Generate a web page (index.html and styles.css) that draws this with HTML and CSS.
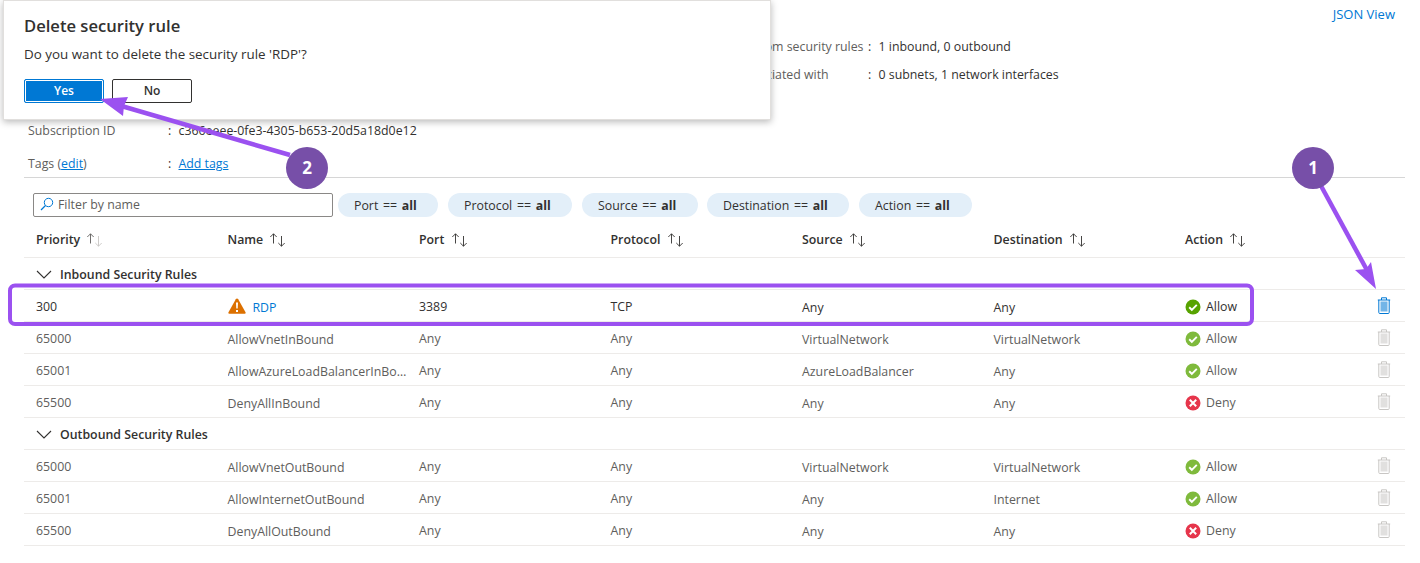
FILE: index.html
```html
<!DOCTYPE html>
<html lang="en">

<head>
    <meta charset="UTF-8">
    <meta name="viewport" content="width=device-width, initial-scale=1.0">
    <title>Delete security rule</title>
    <link rel="stylesheet" href="styles.css">
</head>

<body>
    <svg class="defs" width="0" height="0">
        <symbol id="sort" viewBox="0 0 18 14">
            <path d="M4.500 10.500V.8M1.300 4L4.500.8 7.700 4" fill="none" stroke="#323130" stroke-width=".9"/>
            <path d="M12.500 3v10.200M9.300 10l3.200 3.200 3.200-3.200" fill="none" stroke="#323130" stroke-width=".9"/>
        </symbol>
        <symbol id="sort-up" viewBox="0 0 18 14">
            <path d="M4.500 10.500V.8M1.300 4L4.500.8 7.700 4" fill="none" stroke="#605e5c" stroke-width=".9"/>
            <path d="M12.500 3v10.200M9.300 10l3.200 3.200 3.200-3.200" fill="none" stroke="#c8c6c4" stroke-width=".9"/>
        </symbol>
        <symbol id="chevron" viewBox="0 0 16 10">
            <path d="M1 1l7 7 7-7" fill="none" stroke="#323130" stroke-width="1.100"/>
        </symbol>
        <symbol id="check" viewBox="0 0 16 16">
            <circle cx="8" cy="8" r="7.500"/>
            <path d="M4.200 8.300l2.600 2.500 5-5" fill="none" stroke="#fff" stroke-width="1.900"/>
        </symbol>
        <symbol id="cross" viewBox="0 0 16 16">
            <circle cx="8" cy="8" r="7.500" fill="#e6354b"/>
            <path d="M4.800 4.800l6.400 6.400M11.200 4.800l-6.400 6.400" fill="none" stroke="#fff" stroke-width="2"/>
        </symbol>
        <symbol id="trash" viewBox="0 0 14 17">
            <path d="M3.500 4.500h7v10h-7z" fill="currentColor" opacity=".55"/>
            <path d="M.8 3h12.400M1.800 3v12.500q0 1 1 1h8.400q1 0 1-1V3M4.500 3V.8h5V3" fill="none" stroke="currentColor" stroke-width="1"/>
        </symbol>
    </svg>

    <div class="page">
        <div class="json-row"><a class="link-plain" href="#">JSON View</a></div>

        <div class="essentials">
            <div class="essentials-col">
                <div class="field"></div>
                <div class="field"></div>
                <div class="field"></div>
                <div class="field"><span class="label">Subscription ID</span><span class="sep">:</span><span>c366eeee-0fe3-4305-b653-20d5a18d0e12</span></div>
                <div class="field field-tags"><span class="label">Tags (<a href="#">edit</a>)</span><span class="sep">:</span><a href="#">Add tags</a></div>
            </div>
            <div class="essentials-col essentials-right">
                <div class="field"><span class="label">Custom security rules</span><span class="sep">:</span><span>1 inbound, 0 outbound</span></div>
                <div class="field"><span class="label">Associated with</span><span class="sep">:</span><span>0 subnets, 1 network interfaces</span></div>
            </div>
        </div>

        <div class="filters">
            <div class="search">
                <svg width="14" height="14" viewBox="0 0 14 14"><circle cx="8.500" cy="5.500" r="4.200" fill="none" stroke="#0078d4"/><path d="M5.500 8.500L1 13" stroke="#0078d4" stroke-width="1.200"/></svg>
                <span>Filter by name</span>
            </div>
            <div class="pill pill-port">Port == <b>all</b></div>
            <div class="pill pill-protocol">Protocol == <b>all</b></div>
            <div class="pill pill-source">Source == <b>all</b></div>
            <div class="pill pill-dest">Destination == <b>all</b></div>
            <div class="pill pill-action">Action == <b>all</b></div>
        </div>

        <div class="row head">
            <div>Priority <svg class="sort"><use href="#sort-up"/></svg></div>
            <div>Name <svg class="sort"><use href="#sort"/></svg></div>
            <div>Port <svg class="sort"><use href="#sort"/></svg></div>
            <div>Protocol <svg class="sort"><use href="#sort"/></svg></div>
            <div>Source <svg class="sort"><use href="#sort"/></svg></div>
            <div>Destination <svg class="sort"><use href="#sort"/></svg></div>
            <div>Action <svg class="sort"><use href="#sort"/></svg></div>
        </div>

        <div class="group"><svg class="chevron"><use href="#chevron"/></svg>Inbound Security Rules</div>

        <div class="row rule active">
            <div>300</div>
            <div class="low name-cell">
                <svg class="warn" width="18" height="16" viewBox="0 0 18 16"><path d="M9 .5q.8 0 1.200.7l7.300 13q.6 1.300-.8 1.500H1.300q-1.400-.2-.8-1.500l7.300-13Q8.200.5 9 .500z" fill="#dc7000"/><path d="M8 4.500h2l-.3 6H8.300zM8 12h2v2H8z" fill="#fff"/></svg>
                <a class="link-plain" href="#">RDP</a>
            </div>
            <div>3389</div>
            <div>TCP</div>
            <div class="low">Any</div>
            <div class="low">Any</div>
            <div class="state"><svg class="ok"><use href="#check"/></svg>Allow</div>
            <div class="bin"><svg class="trash"><use href="#trash"/></svg></div>
        </div>
        <div class="row rule">
            <div>65000</div>
            <div class="low">AllowVnetInBound</div>
            <div>Any</div>
            <div>Any</div>
            <div class="low">VirtualNetwork</div>
            <div class="low">VirtualNetwork</div>
            <div class="state"><svg class="ok"><use href="#check"/></svg>Allow</div>
            <div class="bin"><svg class="trash"><use href="#trash"/></svg></div>
        </div>
        <div class="row rule">
            <div>65001</div>
            <div class="low clip">AllowAzureLoadBalancerInBound</div>
            <div>Any</div>
            <div>Any</div>
            <div class="low">AzureLoadBalancer</div>
            <div class="low">Any</div>
            <div class="state"><svg class="ok"><use href="#check"/></svg>Allow</div>
            <div class="bin"><svg class="trash"><use href="#trash"/></svg></div>
        </div>
        <div class="row rule">
            <div>65500</div>
            <div class="low">DenyAllInBound</div>
            <div>Any</div>
            <div>Any</div>
            <div class="low">Any</div>
            <div class="low">Any</div>
            <div class="state"><svg class="ok"><use href="#cross"/></svg>Deny</div>
            <div class="bin"><svg class="trash"><use href="#trash"/></svg></div>
        </div>

        <div class="group"><svg class="chevron"><use href="#chevron"/></svg>Outbound Security Rules</div>

        <div class="row rule">
            <div>65000</div>
            <div class="low">AllowVnetOutBound</div>
            <div>Any</div>
            <div>Any</div>
            <div class="low">VirtualNetwork</div>
            <div class="low">VirtualNetwork</div>
            <div class="state"><svg class="ok"><use href="#check"/></svg>Allow</div>
            <div class="bin"><svg class="trash"><use href="#trash"/></svg></div>
        </div>
        <div class="row rule">
            <div>65001</div>
            <div class="low">AllowInternetOutBound</div>
            <div>Any</div>
            <div>Any</div>
            <div class="low">Any</div>
            <div class="low">Internet</div>
            <div class="state"><svg class="ok"><use href="#check"/></svg>Allow</div>
            <div class="bin"><svg class="trash"><use href="#trash"/></svg></div>
        </div>
        <div class="row rule">
            <div>65500</div>
            <div class="low">DenyAllOutBound</div>
            <div>Any</div>
            <div>Any</div>
            <div class="low">Any</div>
            <div class="low">Any</div>
            <div class="state"><svg class="ok"><use href="#cross"/></svg>Deny</div>
            <div class="bin"><svg class="trash"><use href="#trash"/></svg></div>
        </div>
    </div>

    <!-- confirm dialog -->
    <div class="dialog">
        <div class="dialog-title">Delete security rule</div>
        <p class="dialog-text">Do you want to delete the security rule 'RDP'?</p>
        <div class="dialog-buttons">
            <button class="btn btn-yes">Yes</button>
            <button class="btn">No</button>
        </div>
    </div>

    <!-- annotations drawn on top of the screenshot -->
    <svg class="marks" width="1420" height="563" viewBox="0 0 1420 563">
        <rect x="10" y="285.500" width="1242" height="38.500" rx="5" fill="none" stroke="#9b51f0" stroke-width="4"/>
        <path d="M1320 184l48 88" stroke="#9b51f0" stroke-width="4.500" fill="none"/>
        <path d="M1376 289l-21-19 11-1 5-7z" fill="#9b51f0"/>
        <path d="M290 155L118 105" stroke="#9b51f0" stroke-width="4.500" fill="none"/>
        <path d="M100 99l28-2-4 9-1 10z" fill="#9b51f0"/>
    </svg>
    <div class="badge badge-one">1</div>
    <div class="badge badge-two">2</div>
</body>

</html>
```

FILE: styles.css
```css
* {
    box-sizing: border-box;
}

body {
    margin: 0;
    background: #fff;
    color: #323130;
    font-family: "Open Sans", "Liberation Sans", sans-serif;
    font-size: 12.35px;
    overflow: hidden;
}

a {
    color: #0078d4;
}

.link-plain {
    text-decoration: none;
}

.defs {
    position: absolute;
}

.page {
    width: 1420px;
    height: 563px;
    padding: 0 15px 0 24px;
}

.json-row {
    height: 32px;
    padding-right: 10px;
    font-size: 13px;
    text-align: right;
    line-height: 28px;
}

.essentials {
    display: grid;
    grid-template-columns: 700px 1fr;
    height: 146px;
    padding-left: 4px;
    border-bottom: 1px solid #d6d6d6;
}

.field {
    display: flex;
    height: 28px;
    align-items: center;
}

.field-tags {
    margin-top: 5px;
}

.label {
    width: 140px;
    color: #605e5c;
    white-space: nowrap;
}

.essentials-right .label {
    padding-left: 11px;
}

.sep {
    width: 10.5px;
}

.filters {
    display: flex;
    align-items: center;
    height: 24px;
    margin: 15px 0 0 9px;
}

.search {
    display: flex;
    align-items: center;
    gap: 4px;
    width: 300px;
    height: 24px;
    margin-right: 5px;
    padding: 0 0 2px 6px;
    border: 1px solid #8a8886;
    border-radius: 2px;
    color: #605e5c;
}

.pill {
    height: 24px;
    margin-right: 10px;
    padding-left: 16px;
    border-radius: 12px;
    background: #e3eff9;
    line-height: 25px;
    word-spacing: 1.5px;
}

.pill-port {
    width: 100px;
}

.pill-protocol {
    width: 124px;
}

.pill-source {
    width: 116px;
    margin-right: 9px;
}

.pill-dest {
    width: 142px;
}

.pill-action {
    width: 113px;
}

.row {
    display: grid;
    grid-template-columns: repeat(7, 191.5px) 1fr;
    align-items: center;
    padding-left: 12px;
}

.row > div {
    white-space: nowrap;
}

.head {
    height: 36px;
    margin-top: 5px;
    border-bottom: 1px solid #edebe9;
    font-weight: 600;
}

.sort {
    width: 18px;
    height: 14px;
    margin-left: 3px;
    vertical-align: -3px;
}

.group {
    display: flex;
    align-items: center;
    height: 32px;
    padding: 2px 0 0 12px;
    border-bottom: 1px solid #edebe9;
    font-weight: 600;
}

.chevron {
    width: 16px;
    height: 10px;
    margin-right: 8px;
}

.rule {
    height: 32px;
    padding-top: 2px;
    border-bottom: 1px solid #edebe9;
    color: #605e5c;
}

.rule.active {
    color: #323130;
}

.low {
    padding-top: 2px;
}

.clip {
    overflow: hidden;
    padding-right: 6px;
    text-overflow: ellipsis;
}

.name-cell {
    display: flex;
    align-items: center;
    gap: 7px;
}

.warn {
    margin-top: -3px;
}

.state {
    display: flex;
    align-items: center;
    gap: 5px;
}

.ok {
    width: 16px;
    height: 16px;
    fill: #7fba3c;
}

.active .ok {
    fill: #57a300;
}

.bin {
    margin-top: -2px;
    line-height: 0;
}

.trash {
    width: 14px;
    height: 17px;
    color: #c8c6c4;
}

.active .trash {
    color: #0078d4;
}

.dialog {
    position: absolute;
    left: 3px;
    top: 0;
    width: 768px;
    height: 120px;
    padding: 14px 20px;
    background: #fff;
    border: 1px solid #e1dfdd;
    box-shadow: 0 2px 7px rgba(0, 0, 0, 0.28);
}

.dialog-title {
    font-size: 16.6px;
    font-weight: 600;
    line-height: 22px;
}

.dialog-text {
    margin: 8px 0 16px;
    font-size: 13.4px;
    line-height: 18px;
}

.dialog-buttons {
    display: flex;
    gap: 8px;
}

.btn {
    width: 80px;
    height: 24px;
    padding: 0 0 2px;
    border: 1px solid #323130;
    border-radius: 2px;
    background: #fff;
    color: #323130;
    font-family: inherit;
    font-size: 12px;
    font-weight: 600;
}

.btn-yes {
    border-color: #0078d4;
    background: #0078d4;
    box-shadow: inset 0 0 0 1px #fff;
    color: #fff;
}

.marks {
    position: absolute;
    left: 0;
    top: 0;
}

.badge {
    position: absolute;
    top: 147px;
    width: 42px;
    height: 42px;
    border-radius: 50%;
    background: #774fa8;
    color: #fff;
    font-size: 17px;
    font-weight: 700;
    line-height: 42px;
    text-align: center;
}

.badge-one {
    left: 1292px;
}

.badge-two {
    left: 286px;
}
```
